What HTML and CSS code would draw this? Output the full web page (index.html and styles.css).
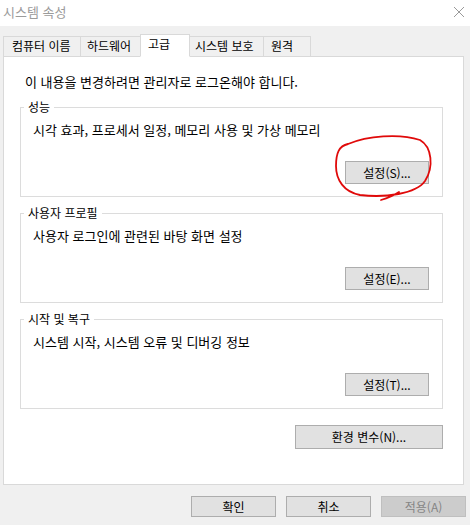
FILE: index.html
```html
<!DOCTYPE html>
<html lang="ko">
<head>
<meta charset="utf-8">
<title>시스템 속성</title>
<link rel="stylesheet" href="styles.css">
</head>
<body>
<div class="window">
  <div class="titlebar">
    <span class="title">시스템 속성</span>
    <svg class="close" width="12" height="12" viewBox="0 0 12 12"><path d="M1 1 L11 11 M11 1 L1 11" stroke="#9a9a9a" stroke-width="1" fill="none"/></svg>
  </div>
  <div class="content">
    <div class="tabs">
      <div class="tab tab-computer">컴퓨터 이름</div>
      <div class="tab tab-hardware">하드웨어</div>
      <div class="tab tab-advanced active">고급</div>
      <div class="tab tab-protect">시스템 보호</div>
      <div class="tab tab-remote">원격</div>
    </div>
    <div class="panel">
      <p class="notice">이 내용을 변경하려면 관리자로 로그온해야 합니다.</p>
      <fieldset class="group">
        <legend>성능</legend>
        <p class="desc">시각 효과, 프로세서 일정, 메모리 사용 및 가상 메모리</p>
        <div class="row">
          <span class="marked">
            <button class="btn small">설정(S)...</button>
            <svg class="mark" width="110" height="75" viewBox="330 130 110 75"><path d="M 349 143 C 368 135, 400 132, 421 139 C 433 146, 435 166, 426 180 C 417 193, 386 197, 361 194 C 345 191, 337 179, 337 165 C 337 152, 340 145, 349 143 M 400 191 C 394 195, 389 197, 382 199" stroke="#e00a0a" stroke-width="1.8" fill="none" stroke-linecap="round"/></svg>
          </span>
        </div>
      </fieldset>
      <fieldset class="group">
        <legend>사용자 프로필</legend>
        <p class="desc">사용자 로그인에 관련된 바탕 화면 설정</p>
        <div class="row"><button class="btn small">설정(E)...</button></div>
      </fieldset>
      <fieldset class="group">
        <legend>시작 및 복구</legend>
        <p class="desc">시스템 시작, 시스템 오류 및 디버깅 정보</p>
        <div class="row"><button class="btn small">설정(T)...</button></div>
      </fieldset>
      <div class="row env-row"><button class="btn env">환경 변수(N)...</button></div>
    </div>
    <div class="footer">
      <button class="btn dlg">확인</button>
      <button class="btn dlg">취소</button>
      <button class="btn dlg disabled">적용(A)</button>
    </div>
  </div>
</div>
</body>
</html>
```
FILE: styles.css
```css
* { box-sizing: border-box; }
html, body { margin: 0; padding: 0; }
body {
  width: 470px;
  height: 525px;
  overflow: hidden;
  background: #f0f0f0;
  font-family: "Noto Sans CJK KR", "Malgun Gothic", sans-serif;
  font-size: 12px;
  color: #000;
}
.titlebar {
  height: 26px;
  background: #fff;
  display: flex;
  align-items: center;
  justify-content: space-between;
  padding: 0 5px 2px 3px;
}
.title { color: #9b9b9b; font-size: 13px; line-height: 16px; }
.close { display: block; }
.content { background: #f0f0f0; }
.tabs {
  display: flex;
  align-items: flex-end;
  height: 23px;
  margin: 8px 0 -1px 3px;
}
.tab {
  height: 21px;
  line-height: 18px;
  padding: 0 0 0 8px;
  border: 1px solid #d9d9d9;
  border-right: none;
  background: #f0f0f0;
  white-space: nowrap;
}
.tab-computer { width: 77px; }
.tab-hardware { width: 60px; padding-left: 6px; }
.tab-advanced { width: 50px; }
.tab-protect { width: 73px; padding-left: 5px; }
.tab-remote { width: 48px; border-right: 1px solid #d9d9d9; padding-left: 7px; }
.tab.active {
  height: 23px;
  line-height: 17px;
  background: #fff;
  border-right: 1px solid #d9d9d9;
  border-bottom-color: #fff;
  position: relative;
  z-index: 1;
  padding-left: 7px;
}
.tab.active + .tab { border-left: none; }
.panel {
  margin-left: 3px;
  width: 461px;
  height: 429px;
  background: #fff;
  border: 1px solid #d9d9d9;
  padding: 17px 20px 0 16px;
}
.notice { margin: 0 0 9px 5px; line-height: 16px; font-size: 13px; }
.group {
  margin: 0 0 8px 0;
  border: 1px solid #dcdcdc;
  padding: 7px 13px 12px 3px;
}
.group legend {
  padding: 0 4px;
  line-height: 16px;
}
.desc { margin: 0 0 23px 9px; line-height: 16px; font-size: 13px; }
.row { display: flex; justify-content: flex-end; }
.btn {
  font-family: inherit;
  font-size: 12px;
  color: #000;
  background: #e1e1e1;
  border: 1px solid #adadad;
  padding: 0;
  margin: 0;
  line-height: 16px;
  display: block;
}
.btn.small { width: 84px; height: 23px; }
.env-row { margin-top: 16px; }
.btn.env { width: 148px; height: 24px; }
.footer {
  display: flex;
  justify-content: flex-end;
  gap: 10px;
  padding: 11px 4px 0 0;
}
.btn.dlg { width: 85px; height: 21px; }
.btn.disabled { background: #cccccc; border-color: #bfbfbf; color: #858585; }
.marked { position: relative; display: block; }
.mark {
  position: absolute;
  left: -16px;
  top: -30px;
  pointer-events: none;
}
```
